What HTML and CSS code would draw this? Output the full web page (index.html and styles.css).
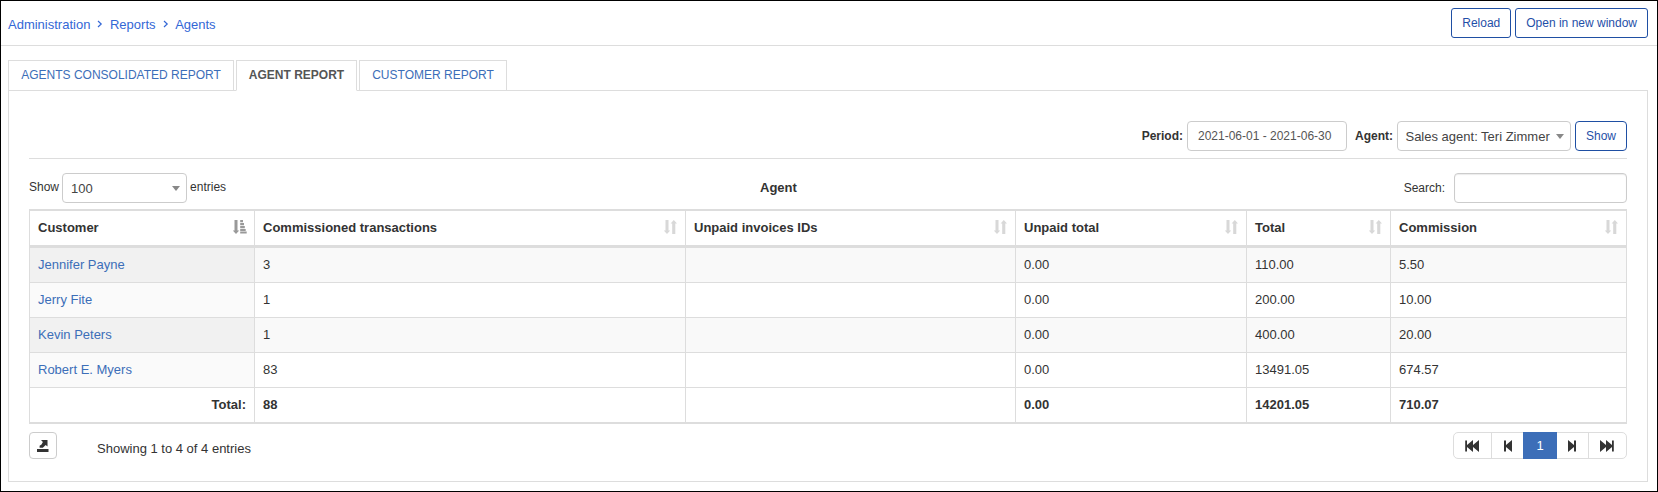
FILE: index.html
```html
<!DOCTYPE html>
<html lang="en">
<head>
<meta charset="utf-8">
<title>Agents</title>
<link rel="stylesheet" href="styles.css">
</head>
<body>
<svg class="defs" width="0" height="0">
  <symbol id="chev" viewBox="0 0 6 8"><path d="M1 1l3.200 3L1 7" fill="none" stroke="currentColor" stroke-width="1.2"/></symbol>
  <symbol id="sort" viewBox="0 0 13 14"><path d="M1.500 0h3v10.500h1.700L3 14-.2 10.500h1.700zM8.200 14h3.100V3.500H13L9.800 0 6.600 3.500h1.600z" fill="currentColor"/></symbol>
  <symbol id="sorted" viewBox="0 0 14 14"><path d="M1.500 0h3v10.500h1.700L3 14-.2 10.500h1.700zM7.200 0h2.800v2.300H7.200zM7.200 3h3.800v2.200H7.200zM7.200 6h4.600v2.200H7.200zM7.200 8.900h5.500v2H7.200zM7.200 11.600h6.500v1.900H7.200z" fill="currentColor"/></symbol>
  <symbol id="last" viewBox="0 0 14 12"><path d="M0 0l6 5V0l6 5V0.500h1.800v11H12V7l-6 5V7l-6 5z" fill="currentColor"/></symbol>
  <symbol id="next" viewBox="0 0 8 12"><path d="M0 0l6 5V0.500h2v11H6V7L0 12z" fill="currentColor"/></symbol>
</svg>
<div class="page">
  <header class="top">
    <nav class="crumbs"><a>Administration</a><svg><use href="#chev"/></svg><a>Reports</a><svg><use href="#chev"/></svg><a>Agents</a></nav>
    <div class="actions"><button class="btn">Reload</button><button class="btn">Open in new window</button></div>
  </header>
  <div class="tabs"><a class="tab t1">AGENTS CONSOLIDATED REPORT</a><a class="tab t2 active">AGENT REPORT</a><a class="tab t3">CUSTOMER REPORT</a></div>
  <main class="panel">
    <div class="filters">
      <b>Period:</b><div class="field period">2021-06-01 - 2021-06-30</div>
      <b>Agent:</b><div class="field select agent">Sales agent: Teri Zimmer<i></i></div>
      <button class="btn show">Show</button>
    </div>
    <div class="tools">
      <div class="length"><span>Show</span><div class="field select count">100<i></i></div><span>entries</span></div>
      <b class="title">Agent</b>
      <div class="search"><span>Search:</span><div class="field query"></div></div>
    </div>
    <table>
      <colgroup><col class="c1"><col class="c2"><col class="c3"><col class="c4"><col class="c5"><col class="c6"></colgroup>
      <thead><tr>
        <th><div>Customer<svg class="on"><use href="#sorted"/></svg></div></th>
        <th><div>Commissioned transactions<svg><use href="#sort"/></svg></div></th>
        <th><div>Unpaid invoices IDs<svg><use href="#sort"/></svg></div></th>
        <th><div>Unpaid total<svg><use href="#sort"/></svg></div></th>
        <th><div>Total<svg><use href="#sort"/></svg></div></th>
        <th><div>Commission<svg><use href="#sort"/></svg></div></th>
      </tr></thead>
      <tbody>
        <tr><td><a>Jennifer Payne</a></td><td>3</td><td></td><td>0.00</td><td>110.00</td><td>5.50</td></tr>
        <tr><td><a>Jerry Fite</a></td><td>1</td><td></td><td>0.00</td><td>200.00</td><td>10.00</td></tr>
        <tr><td><a>Kevin Peters</a></td><td>1</td><td></td><td>0.00</td><td>400.00</td><td>20.00</td></tr>
        <tr><td><a>Robert E. Myers</a></td><td>83</td><td></td><td>0.00</td><td>13491.05</td><td>674.57</td></tr>
      </tbody>
      <tfoot><tr><td>Total:</td><td>88</td><td></td><td>0.00</td><td>14201.05</td><td>710.07</td></tr></tfoot>
    </table>
    <div class="bottom">
      <button class="export"><svg viewBox="0 0 12 12"><path d="M0 9h11.500v3H0zM4 0h6.500v6.500L8.700 4.900 5.800 7.800H2.600V5.800L4.500 4.600 5.900 2z" fill="currentColor"/></svg></button>
      <span class="info">Showing 1 to 4 of 4 entries</span>
      <div class="pager">
        <a class="p1"><svg class="wide flip"><use href="#last"/></svg></a><a class="p2"><svg class="flip"><use href="#next"/></svg></a><a class="p3">1</a><a class="p4"><svg><use href="#next"/></svg></a><a class="p5"><svg class="wide"><use href="#last"/></svg></a>
      </div>
    </div>
  </main>
</div>
</body>
</html>
```
FILE: styles.css
```css
* { box-sizing: border-box; }
body { margin: 0; background: #fff; color: #333; font: 13px/20px "Liberation Sans", Arial, sans-serif; }
.defs { display: block; }
.page { height: 492px; border: 1px solid #000; overflow: hidden; }
.top { height: 45px; border-bottom: 1px solid #ddd; display: flex; justify-content: space-between; align-items: flex-start; padding: 7px 9px 0 7px; }
.crumbs { display: flex; align-items: center; padding-top: 7px; color: #3367d6; }
.crumbs svg { width: 6px; height: 8px; margin: 0 7px 2px 7px; }
.crumbs svg + a { margin-left: -0.4px; }
.actions { display: flex; gap: 4px; }
.btn { height: 30px; padding: 0 10px; border: 1px solid #1f4fa3; border-radius: 3px; background: #fff; color: #1f4fa8; font: 12px/18px "Liberation Sans", Arial, sans-serif; white-space: nowrap; }
.tabs { display: flex; gap: 2px; padding: 14px 0 0 7px; height: 45px; position: relative; z-index: 1; }
.tab { height: 31px; border: 1px solid #ddd; font-size: 12px; line-height: 28px; text-align: center; color: #3c6eb8; white-space: nowrap; }
.t1 { width: 226px; }
.t2 { width: 121px; }
.t3 { width: 148px; }
.tab.active { color: #555; font-weight: bold; border-bottom-color: #fff; background: #fff; }
.panel { margin: -1px 9px 0 7px; height: 392px; border: 1px solid #ddd; padding: 30px 20px 0; }
.filters { height: 38px; border-bottom: 1px solid #ddd; display: flex; justify-content: flex-end; font-size: 12px; line-height: 30px; }
.field { height: 30px; border: 1px solid #ccc; border-radius: 4px; color: #555; background: #fff; }
.period { width: 160px; padding-left: 10px; line-height: 28px; font-size: 12px; margin: 0 8px 0 4px; }
.select { display: flex; justify-content: space-between; align-items: center; padding: 1px 6px 0 8px; font-size: 13px; line-height: 20px; color: #444; }
.select i { border: 4px solid transparent; border-top: 5px solid #888; border-bottom: 0; }
.agent { width: 174px; margin: 0 4px; padding-left: 7.5px; white-space: nowrap; }
.show { border-radius: 4px; }
.tools { display: grid; grid-template-columns: 731px 1fr auto; padding-top: 14px; height: 50px; font-size: 12px; line-height: 28px; }
.length { display: flex; gap: 3px; }
.count { width: 125px; }
.title { font-size: 13px; line-height: 30px; }
.search { display: flex; gap: 9px; line-height: 30px; }
.query { width: 173px; box-shadow: inset 0 1px 1px rgba(0,0,0,.08); }
table { table-layout: fixed; width: 1598px; border-collapse: separate; border-spacing: 0; border: solid #ddd; border-width: 2px 1px 1px 0; }
.c1 { width: 225px; }
.c2 { width: 431px; }
.c3 { width: 330px; }
.c4 { width: 231px; }
.c5 { width: 144px; }
.c6 { width: 236px; }
th, td { border-left: 1px solid #ddd; border-bottom: 1px solid #ddd; padding: 0 8px; text-align: left; height: 35px; line-height: 20px; vertical-align: middle; }
th { height: 37px; border-bottom-width: 3px; }
th div { display: flex; justify-content: space-between; align-items: center; }
th svg { width: 13px; height: 14px; margin-bottom: 2px; color: #d8d8d8; overflow: visible; }
th svg.on { width: 14px; margin-right: -1px; color: #999; }
td a { color: #3c6eb8; }
tbody tr:nth-child(odd) { background: #f9f9f9; }
tbody td:first-child { background: #fafafa; }
tbody tr:nth-child(odd) td:first-child { background: #f1f1f1; }
tfoot td { font-weight: bold; }
tfoot td:first-child { text-align: right; }
.bottom { display: flex; padding-top: 8px; }
.export { width: 28px; height: 27px; border: 1px solid #ccc; border-radius: 4px; background: #fff; color: #333; padding: 1px 0 0; display: flex; align-items: center; justify-content: center; }
.export svg { width: 12px; height: 12px; }
.info { margin: 7px auto 0 40px; }
.pager { display: flex; width: 174px; height: 27px; border: 1px solid #ddd; border-radius: 5px; }
.pager a { display: flex; align-items: center; justify-content: center; border-right: 1px solid #ddd; }
.pager svg { width: 8px; height: 12px; }
.pager svg.wide { width: 14px; }
.pager svg.flip { transform: scaleX(-1); }
.pager .p1 { width: 38px; padding-right: 1px; }
.pager .p2 { width: 31px; border: 0; }
.pager .p3 { width: 34px; margin: -1px 0; border: 0; background: #3c6eb8; color: #fff; }
.pager .p4 { width: 32px; padding-right: 1px; }
.pager .p5 { width: 37px; border: 0; padding-right: 1px; }
```
